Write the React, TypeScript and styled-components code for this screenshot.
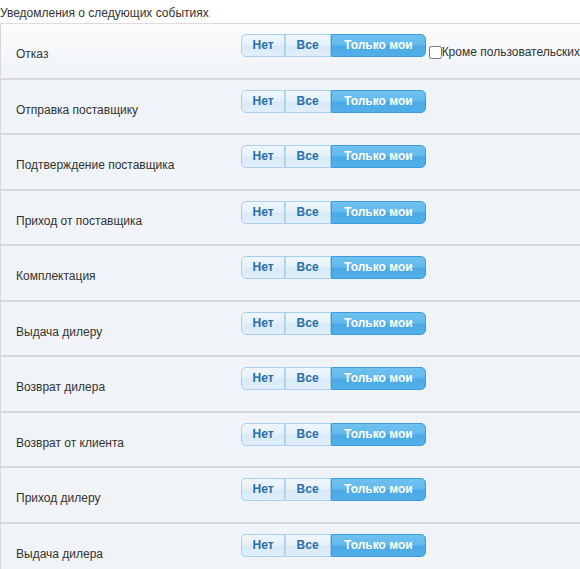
import React, { useState } from "react";
import styled, { createGlobalStyle } from "styled-components";

const Global = createGlobalStyle`
  html, body { margin: 0; padding: 0; overflow: hidden; background: #ffffff; }
  body { font-family: "Liberation Sans", Arial, sans-serif; font-size: 12px; color: #333333; }
`;

const Page = styled.div`
  width: 580px;
  overflow: hidden;
`;

const Title = styled.div`
  padding-top: 6px;
  margin-bottom: 3px;
  line-height: 14px;
  font-size: 12px;
  color: #333333;
  white-space: nowrap;
`;

const Box = styled.div`
  border-top: 1px solid #dcdcdc;
  border-left: 1px solid #d6d6d6;
`;

const Row = styled.div<{ $first?: boolean }>`
  display: flex;
  align-items: flex-start;
  height: 53.5px;
  box-sizing: content-box;
  border-bottom: 2px solid #d8d8d8;
  background: ${(p) =>
    p.$first ? "linear-gradient(to bottom, #fbfcfd 0%, #f0f3f7 100%)" : "#f0f3f7"};
`;

const Label = styled.div`
  flex: 0 0 225px;
  padding-left: 15px;
  margin-top: 23px;
  line-height: 14px;
  font-size: 12px;
  color: #333333;
  white-space: nowrap;
`;

const Controls = styled.div`
  display: flex;
  flex: 0 0 auto;
  align-items: flex-start;
  margin-top: 10px;
`;

const Group = styled.div`
  display: flex;
  flex: 0 0 auto;
  height: 23px;
`;

const Seg = styled.button<{ $active?: boolean; $pos: "first" | "mid" | "last" }>`
  flex: 0 0 auto;
  height: 23px;
  box-sizing: border-box;
  padding: 0 ${(p) => (p.$pos === "first" ? "10.5px" : p.$pos === "mid" ? "11.5px" : "12px")};
  margin: 0;
  white-space: nowrap;
  font-family: "Liberation Sans", Arial, sans-serif;
  font-size: 12px;
  font-weight: bold;
  line-height: 21px;
  cursor: pointer;
  border: 1px solid ${(p) => (p.$active ? "#3a9be0" : "#aacfec")};
  border-left-width: ${(p) => (p.$pos === "first" || p.$active ? "1px" : "0")};
  border-radius: ${(p) =>
    p.$pos === "first" ? "5px 0 0 5px" : p.$pos === "last" ? "0 5px 5px 0" : "0"};
  color: ${(p) => (p.$active ? "#ffffff" : "#2b6ea8")};
  background: ${(p) =>
    p.$active
      ? "linear-gradient(to bottom, #6fc1ef 0%, #62baed 48%, #4aa9e6 52%, #52afe8 100%)"
      : "linear-gradient(to bottom, #eef6fd 0%, #e6f1fb 48%, #d8eaf8 52%, #e0eefa 100%)"};
  ${(p) =>
    !p.$active && p.$pos !== "first" ? "box-shadow: inset 1px 0 0 #b9d8ef;" : ""}
`;

const CheckWrap = styled.label`
  display: flex;
  flex: 0 0 auto;
  align-items: center;
  height: 14px;
  margin-top: 11px;
  font-size: 12px;
  line-height: 14px;
  color: #333333;
  white-space: nowrap;
`;

const Check = styled.input`
  width: 13px;
  height: 13px;
  margin: 0 0 0 3px;
`;

type Choice = "none" | "all" | "mine";

const events = [
  "Отказ",
  "Отправка поставщику",
  "Подтверждение поставщика",
  "Приход от поставщика",
  "Комплектация",
  "Выдача дилеру",
  "Возврат дилера",
  "Возврат от клиента",
  "Приход дилеру",
  "Выдача дилера",
];

function Toggle({ value, onChange }: { value: Choice; onChange: (v: Choice) => void }) {
  return (
    <Group>
      <Seg $pos="first" $active={value === "none"} onClick={() => onChange("none")}>
        Нет
      </Seg>
      <Seg $pos="mid" $active={value === "all"} onClick={() => onChange("all")}>
        Все
      </Seg>
      <Seg $pos="last" $active={value === "mine"} onClick={() => onChange("mine")}>
        Только мои
      </Seg>
    </Group>
  );
}

export default function App() {
  const [values, setValues] = useState<Choice[]>(events.map(() => "mine"));
  return (
    <Page>
      <Global />
      <Title>Уведомления о следующих событиях</Title>
      <Box>
        {events.map((name, i) => (
          <Row key={i} $first={i === 0}>
            <Label>{name}</Label>
            <Controls>
              <Toggle
                value={values[i]}
                onChange={(v) => setValues((old) => old.map((x, j) => (j === i ? v : x)))}
              />
              {i === 0 && (
                <CheckWrap>
                  <Check type="checkbox" />
                  Кроме пользовательских
                </CheckWrap>
              )}
            </Controls>
          </Row>
        ))}
      </Box>
    </Page>
  );
}
